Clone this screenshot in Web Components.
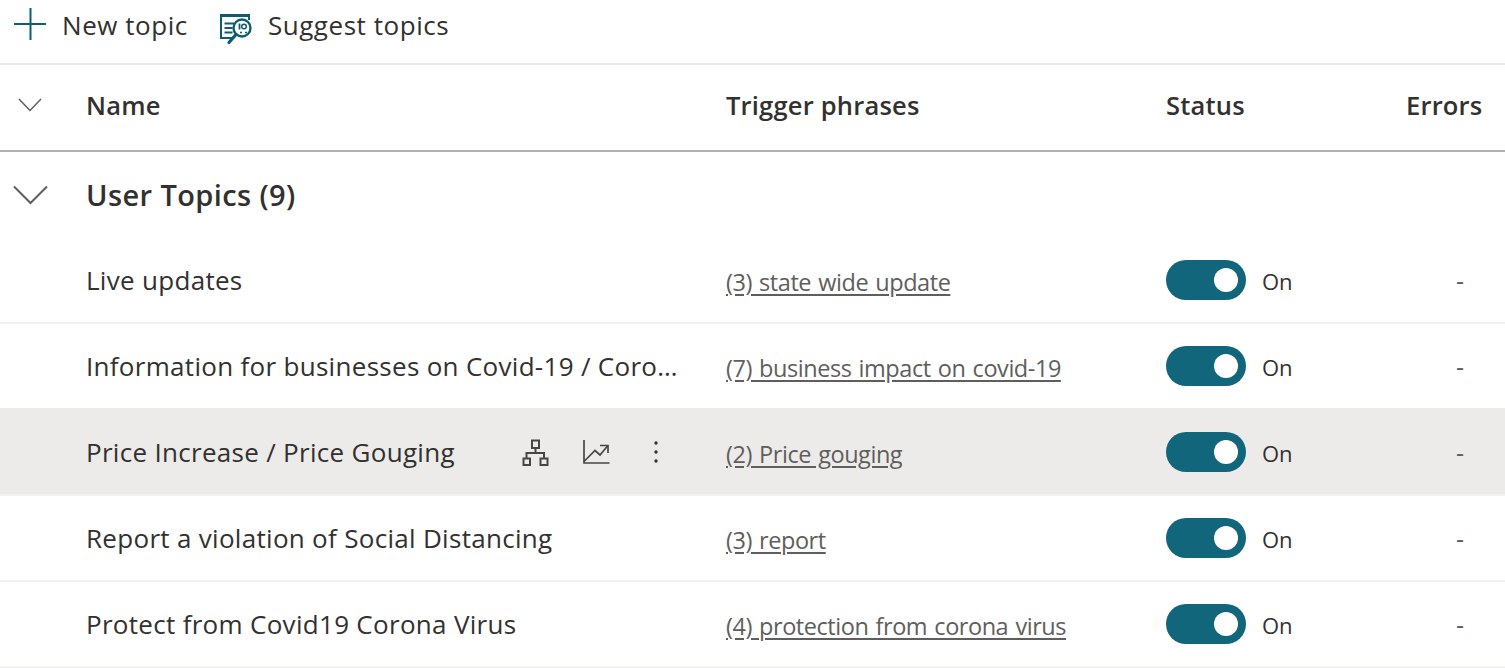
<!DOCTYPE html>
<html><head><meta charset="utf-8">
<style>
html,body{margin:0;padding:0;background:#fff;overflow:hidden}
body{font-family:"Open Sans","Noto Sans","Liberation Sans",sans-serif;color:#323130}
topics-page{display:block}
</style></head><body>
<topics-page>
<tool-bar></tool-bar>
<table-head></table-head>
<group-row label="User Topics (9)"></group-row>
<topic-row first name="Live updates" phrase="(3) state wide update"></topic-row>
<topic-row name="Information for businesses on Covid-19 / Coro…" phrase="(7) business impact on covid-19"></topic-row>
<topic-row name="Price Increase / Price Gouging" phrase="(2) Price gouging" hover></topic-row>
<topic-row name="Report a violation of Social Distancing" phrase="(3) report"></topic-row>
<topic-row last name="Protect from Covid19 Corona Virus" phrase="(4) protection from corona virus"></topic-row>
</topics-page>
<script>
function el(name,html,init){
  customElements.define(name,class extends HTMLElement{
    connectedCallback(){
      if(this.shadowRoot)return;
      const r=this.attachShadow({mode:'open'});
      r.innerHTML=html;
      if(init)init(this,r);
    }
  });
}
el('tool-bar',`<style>
:host{display:flex;align-items:flex-start;height:63px;border-bottom:2px solid #edebe9;padding-left:14px;font-size:26px;color:#323130}
.b{display:flex;align-items:flex-start;height:50px}
svg{display:block;flex:none}
span{white-space:nowrap;line-height:50px;letter-spacing:.55px;margin-left:15px}
.a svg{margin-top:8px}
.c{margin-left:32px}.c svg{margin-top:14px}.c span{margin-left:16px}
</style>
<div class="b a"><svg width="33" height="33" viewBox="0 0 33 33"><path d="M16.500 0V32M0 16H32" stroke="#0f5f74" stroke-width="2" fill="none"/></svg><span>New topic</span></div>
<div class="b c"><svg width="32" height="30" viewBox="0 0 32 30" fill="none">
<path d="M0 1.500H30" stroke="#0f5c72" stroke-width="3"/><path d="M1 1V24H13M29 1V6" stroke="#0f5c72" stroke-width="2"/>
<path d="M4.500 9.500H14M4.500 14H12.500M4.500 18.500H12.500" stroke="#0f5c72" stroke-width="2.200"/>
<circle cx="22" cy="14" r="8.500" fill="#fff" stroke="#0f5c72" stroke-width="2.400"/>
<path d="M16 20.500L9 28.500" stroke="#0f5c72" stroke-width="3.200" stroke-linecap="round"/>
<path d="M19.500 9.500V15.500" stroke="#0f5c72" stroke-width="1.800"/><circle cx="24" cy="12.500" r="2.300" stroke="#0f5c72" stroke-width="1.500"/><path d="M20 18.500h2M25 18.500h2" stroke="#0f5c72" stroke-width="1.600"/>
</svg><span>Suggest topics</span></div>`);
el('table-head',`<style>
:host{display:grid;grid-template-columns:86px 640px 440px 240px 1fr;height:79px;padding-bottom:6px;align-items:center;border-bottom:2px solid #b3b0ad;font-size:25.500px;font-weight:600;color:#323130}
div{white-space:nowrap;letter-spacing:.2px}
svg{display:block;margin-left:18px}
</style>
<svg width="24" height="14" viewBox="0 0 24 14" fill="none"><path d="M1 1L12 12.500L23 1" stroke="#605e5c" stroke-width="1.500"/></svg>
<div>Name</div><div>Trigger phrases</div><div>Status</div><div>Errors</div>`);
el('group-row',`<style>
:host{display:flex;align-items:center;box-sizing:border-box;height:84px;padding-top:1px;font-size:29px;font-weight:600;color:#323130}
svg{display:block;margin-left:13px;margin-right:38px;flex:none}
span{letter-spacing:.4px;white-space:nowrap}
</style>
<svg width="35" height="20" viewBox="0 0 35 20" fill="none"><path d="M1 1.500L17.500 18L34 1.500" stroke="#605e5c" stroke-width="2"/></svg><span></span>`,(h,r)=>{r.querySelector('span').textContent=h.getAttribute('label')});
el('topic-row',`<style>
:host{display:grid;grid-template-columns:86px 640px 440px 1fr;box-sizing:border-box;height:86px;align-items:center;border-top:2px solid #f3f2f1;font-size:26px;color:#323130}
:host([first]){border-top-color:transparent}
:host([last]){height:88px;border-bottom:2px solid #f3f2f1}
:host([hover]){background:#edebe9;border-top-color:#edebe9}
.name{display:flex;align-items:center;padding-right:46px;min-width:0}
.t{flex:1;min-width:0;white-space:nowrap;overflow:hidden;letter-spacing:.3px}
.acts{display:none;align-items:center;flex:none}
:host([hover]) .acts{display:flex}
.acts svg{display:block;flex:none}
.ph{padding-top:2px}
a{font-size:23.500px;color:#605e5c;text-decoration:underline;text-underline-offset:3px;white-space:nowrap;letter-spacing:-.45px;word-spacing:1.500px}
.st{display:flex;align-items:center}
.tg{width:80px;height:40px;border-radius:20px;background:#12667b;position:relative;flex:none}
.tg i{position:absolute;right:8px;top:8px;width:24px;height:24px;border-radius:50%;background:#fff}
.st span{margin-left:16px;padding-top:2px;font-size:22px;letter-spacing:-.2px}
.er{margin-left:auto;margin-right:41px;color:#605e5c;font-size:25px}
</style>
<div></div>
<div class="name"><div class="t"></div><div class="acts">
<svg width="28" height="27" viewBox="0 0 28 27" fill="none" stroke="#484644" stroke-width="2"><rect x="10" y="1.500" width="7" height="7.500"/><path d="M13.500 9V14M4.500 19.500V14H22V19.500"/><rect x="1.500" y="19.500" width="6.500" height="6.500"/><rect x="18.500" y="19.500" width="7" height="6.500"/></svg>
<svg style="margin-left:33px" width="27" height="24" viewBox="0 0 27 24" fill="none" stroke="#484644" stroke-width="1.700"><path d="M1 0V23H26.500"/><path d="M1 21.500L12 10.500L17 15L24.500 6"/><path d="M17 5.500H25V13"/></svg>
<svg style="margin-left:40px;margin-right:18px" width="12" height="24" viewBox="0 0 12 24" fill="#323130"><circle cx="6" cy="3" r="1.700"/><circle cx="6" cy="12" r="1.700"/><circle cx="6" cy="21" r="1.700"/></svg>
</div></div>
<div class="ph"><a></a></div>
<div class="st"><div class="tg"><i></i></div><span>On</span><div class="er">-</div></div>`,(h,r)=>{
  r.querySelector('.t').textContent=h.getAttribute('name');
  r.querySelector('a').textContent=h.getAttribute('phrase');
});
</script>
</body></html>
